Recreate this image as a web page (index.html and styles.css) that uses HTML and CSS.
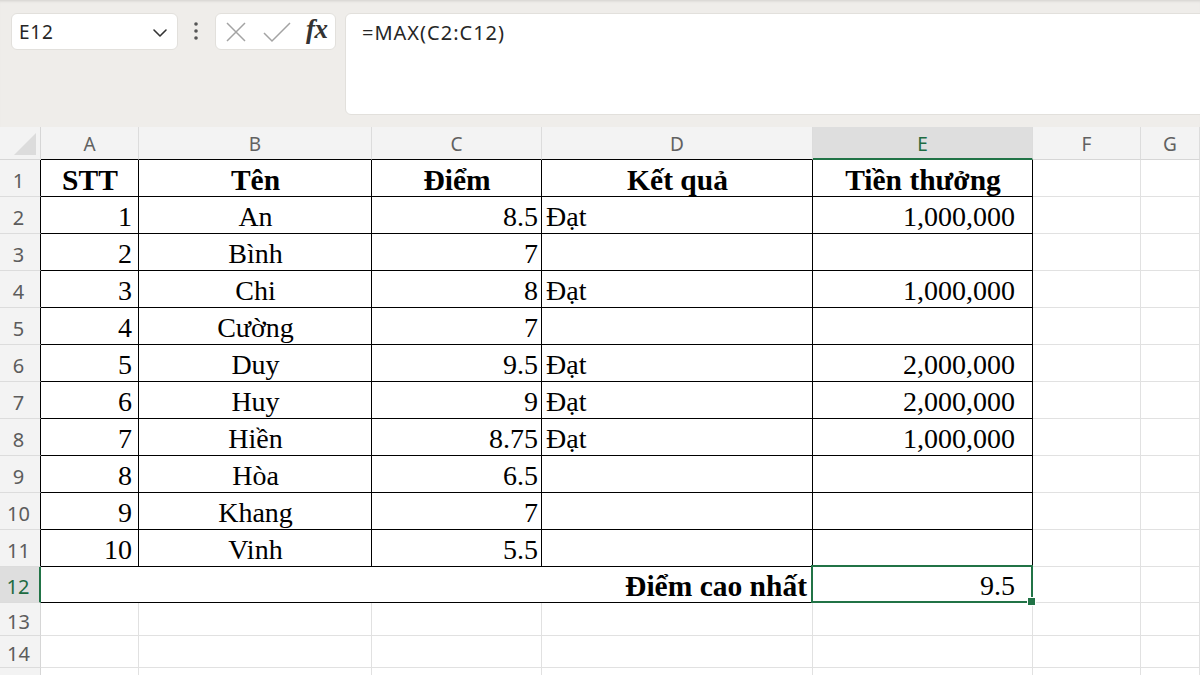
FILE: index.html
```html
<!DOCTYPE html>
<html lang="vi">
<head>
<meta charset="utf-8">
<title>Excel MAX</title>
<link rel="stylesheet" href="styles.css">
</head>
<body>
<div class="toolbar">
  <div class="namebox">
    <span class="name">E12</span>
    <svg class="chev" width="16" height="10" viewBox="0 0 16 10"><path d="M2 2 L8 8 L14 2" fill="none" stroke="#333" stroke-width="1.6" stroke-linecap="round" stroke-linejoin="round"/></svg>
  </div>
  <div class="dots">
    <svg width="6" height="20" viewBox="0 0 6 20"><circle cx="3" cy="3" r="1.8" fill="#555"/><circle cx="3" cy="10" r="1.8" fill="#555"/><circle cx="3" cy="17" r="1.8" fill="#555"/></svg>
  </div>
  <div class="fxbox">
    <svg class="ico" width="22" height="22" viewBox="0 0 22 22"><path d="M2 2 L20 20 M20 2 L2 20" stroke="#a3a3a3" stroke-width="1.5" fill="none"/></svg>
    <svg class="ico chk" width="28" height="22" viewBox="0 0 28 22"><path d="M1 12 L9 20 L27 2" stroke="#a3a3a3" stroke-width="1.5" fill="none"/></svg>
    <span class="fx">fx</span>
  </div>
  <div class="formula">=MAX(C2:C12)</div>
</div>

<div class="sheet">
  <!-- header row -->
  <div class="corner"><span class="tri"></span></div>
  <div class="ch tb">A</div>
  <div class="ch tb">B</div>
  <div class="ch tb">C</div>
  <div class="ch tb">D</div>
  <div class="ch sel">E</div>
  <div class="ch">F</div>
  <div class="ch">G</div>

  <!-- row 1 -->
  <div class="rh tb">1</div>
  <div class="c t ctr b">STT</div>
  <div class="c t ctr b">Tên</div>
  <div class="c t ctr b">Điểm</div>
  <div class="c t ctr b">Kết quả</div>
  <div class="c t ctr b">Tiền thưởng</div>
  <div class="c"></div>
  <div class="c"></div>

  <!-- row 2 -->
  <div class="rh tb">2</div>
  <div class="c t r ca">1</div>
  <div class="c t ctr">An</div>
  <div class="c t r cc">8.5</div>
  <div class="c t l">Đạt</div>
  <div class="c t r ce">1,000,000</div>
  <div class="c"></div>
  <div class="c"></div>

  <!-- row 3 -->
  <div class="rh tb">3</div>
  <div class="c t r ca">2</div>
  <div class="c t ctr">Bình</div>
  <div class="c t r cc">7</div>
  <div class="c t l"></div>
  <div class="c t r ce"></div>
  <div class="c"></div>
  <div class="c"></div>

  <!-- row 4 -->
  <div class="rh tb">4</div>
  <div class="c t r ca">3</div>
  <div class="c t ctr">Chi</div>
  <div class="c t r cc">8</div>
  <div class="c t l">Đạt</div>
  <div class="c t r ce">1,000,000</div>
  <div class="c"></div>
  <div class="c"></div>

  <!-- row 5 -->
  <div class="rh tb">5</div>
  <div class="c t r ca">4</div>
  <div class="c t ctr">Cường</div>
  <div class="c t r cc">7</div>
  <div class="c t l"></div>
  <div class="c t r ce"></div>
  <div class="c"></div>
  <div class="c"></div>

  <!-- row 6 -->
  <div class="rh tb">6</div>
  <div class="c t r ca">5</div>
  <div class="c t ctr">Duy</div>
  <div class="c t r cc">9.5</div>
  <div class="c t l">Đạt</div>
  <div class="c t r ce">2,000,000</div>
  <div class="c"></div>
  <div class="c"></div>

  <!-- row 7 -->
  <div class="rh tb">7</div>
  <div class="c t r ca">6</div>
  <div class="c t ctr">Huy</div>
  <div class="c t r cc">9</div>
  <div class="c t l">Đạt</div>
  <div class="c t r ce">2,000,000</div>
  <div class="c"></div>
  <div class="c"></div>

  <!-- row 8 -->
  <div class="rh tb">8</div>
  <div class="c t r ca">7</div>
  <div class="c t ctr">Hiền</div>
  <div class="c t r cc">8.75</div>
  <div class="c t l">Đạt</div>
  <div class="c t r ce">1,000,000</div>
  <div class="c"></div>
  <div class="c"></div>

  <!-- row 9 -->
  <div class="rh tb">9</div>
  <div class="c t r ca">8</div>
  <div class="c t ctr">Hòa</div>
  <div class="c t r cc">6.5</div>
  <div class="c t l"></div>
  <div class="c t r ce"></div>
  <div class="c"></div>
  <div class="c"></div>

  <!-- row 10 -->
  <div class="rh tb">10</div>
  <div class="c t r ca">9</div>
  <div class="c t ctr">Khang</div>
  <div class="c t r cc">7</div>
  <div class="c t l"></div>
  <div class="c t r ce"></div>
  <div class="c"></div>
  <div class="c"></div>

  <!-- row 11 -->
  <div class="rh tb">11</div>
  <div class="c t r ca">10</div>
  <div class="c t ctr">Vinh</div>
  <div class="c t r cc">5.5</div>
  <div class="c t l"></div>
  <div class="c t r ce"></div>
  <div class="c"></div>
  <div class="c"></div>

  <!-- row 12 -->
  <div class="rh rsel">12</div>
  <div class="c t r b merged">Điểm cao nhất</div>
  <div class="c t r ce active">9.5</div>
  <div class="c"></div>
  <div class="c"></div>

  <!-- row 13 -->
  <div class="rh">13</div>
  <div class="c"></div><div class="c"></div><div class="c"></div><div class="c"></div><div class="c"></div><div class="c"></div><div class="c"></div>

  <!-- row 14 -->
  <div class="rh">14</div>
  <div class="c"></div><div class="c"></div><div class="c"></div><div class="c"></div><div class="c"></div><div class="c"></div><div class="c"></div>

  <!-- row 15 (only its top edge is visible) -->
  <div class="rh"></div>
  <div class="c"></div><div class="c"></div><div class="c"></div><div class="c"></div><div class="c"></div><div class="c"></div><div class="c"></div>
</div>
</body>
</html>
```

FILE: styles.css
```css
* { box-sizing: border-box; }

html, body {
  margin: 0;
  padding: 0;
}

body {
  width: 1200px;
  height: 675px;
  overflow: hidden;
  background: #ffffff;
  font-family: "Noto Sans", "Open Sans", sans-serif;
}

/* ---------- toolbar / formula bar ---------- */
.toolbar {
  height: 127px;
  background: #efedea;
  box-shadow: inset 0 3px 3px -2px rgba(0, 0, 0, 0.12);
  display: flex;
  align-items: flex-start;
  padding: 13px 0 0 11px;
  overflow: hidden;
}

.namebox {
  width: 167px;
  height: 37px;
  background: #fff;
  border: 1px solid #e2e0dc;
  border-radius: 6px;
  display: flex;
  align-items: center;
  justify-content: space-between;
  padding: 0 9px 0 7px;
}

.name {
  font-size: 19px;
  color: #262626;
  letter-spacing: 0.8px;
}

.chev { margin-top: 2px; }

.dots {
  width: 37px;
  height: 37px;
  display: flex;
  align-items: center;
  justify-content: center;
  padding-bottom: 1px;
  padding-right: 2px;
}

.fxbox {
  width: 121px;
  height: 37px;
  background: #fff;
  border: 1px solid #e2e0dc;
  border-radius: 6px;
  display: flex;
  align-items: center;
  padding: 0 0 0 9px;
}

.ico { flex: none; }
.chk { margin-left: 16px; }

.fx {
  margin-left: 15px;
  font-family: "Liberation Serif", "DejaVu Serif", serif;
  font-style: italic;
  font-weight: 600;
  font-size: 27px;
  color: #333;
  margin-top: -4px;
  letter-spacing: -0.5px;
}

.formula {
  margin-left: 9px;
  flex: 1;
  height: 102px;
  margin-right: -10px;
  background: #fff;
  border: 1px solid #e2e0dc;
  border-radius: 6px;
  padding: 5px 0 0 16px;
  font-size: 20px;
  letter-spacing: 1px;
  color: #262626;
}

/* ---------- sheet grid ---------- */
.sheet {
  display: grid;
  grid-template-columns: 41px 98px 233px 170px 271px 220px 108px 1fr;
  grid-template-rows: 33px repeat(11, 37px) 36px 33px 32px 40px;
  font-family: "Liberation Serif", "Times New Roman", serif;
  font-size: 28px;
  color: #000;
}

.corner {
  background: #f3f3f3;
  border-right: 1px solid #d6d6d6;
  border-bottom: 1px solid #d6d6d6;
  position: relative;
}

.tri {
  position: absolute;
  right: 4px;
  bottom: 4px;
  width: 0;
  height: 0;
  border-left: 22px solid transparent;
  border-bottom: 22px solid #dcdcdc;
}

.ch {
  background: #f3f3f3;
  border-right: 1px solid #dcdcdc;
  border-bottom: 1px solid #d6d6d6;
  font-family: "Noto Sans", "Open Sans", sans-serif;
  font-size: 19px;
  color: #616161;
  display: flex;
  align-items: center;
  justify-content: center;
  padding-top: 2px;
}

.ch.tb { border-bottom-color: #000; }

.ch.sel {
  background: #dedede;
  color: #1d6b41;
  border-bottom: 2px solid #217346;
}

.rh {
  background: #f3f3f3;
  border-right: 1px solid #d6d6d6;
  border-bottom: 1px solid #dcdcdc;
  font-family: "Noto Sans", "Open Sans", sans-serif;
  font-size: 20px;
  color: #5c5c5c;
  display: flex;
  align-items: center;
  justify-content: center;
  padding-top: 4px;
  padding-right: 3px;
}

.rh.tb { border-right-color: #000; }

.rh.rsel {
  background: #dedede;
  color: #1d6b41;
  border-right: 2px solid #217346;
}

.c {
  border-right: 1px solid #e1e1e1;
  border-bottom: 1px solid #e1e1e1;
  display: flex;
  align-items: flex-end;
  padding: 0 3px 1px 4px;
  line-height: 31px;
  white-space: nowrap;
  overflow: hidden;
}

.c.t {
  border-right-color: #000;
  border-bottom-color: #000;
}

.ctr { justify-content: center; }
.r { justify-content: flex-end; }
.l { justify-content: flex-start; }
.b { font-weight: bold; font-size: 29.5px; padding-bottom: 0; }

.ca { padding-right: 6px; }
.cc { padding-right: 3px; }
.ce { padding-right: 17px; }

.merged {
  grid-column: span 4;
  padding-right: 5px;
}

.active {
  position: relative;
  overflow: visible;
}

.active::after {
  content: "";
  position: absolute;
  left: -2px;
  top: -2px;
  right: -1px;
  bottom: -1px;
  border: 2px solid #217346;
  pointer-events: none;
}

.active::before {
  content: "";
  position: absolute;
  right: -4px;
  bottom: -4px;
  width: 7px;
  height: 7px;
  background: #217346;
  border: 1px solid #fff;
  z-index: 2;
}
```
